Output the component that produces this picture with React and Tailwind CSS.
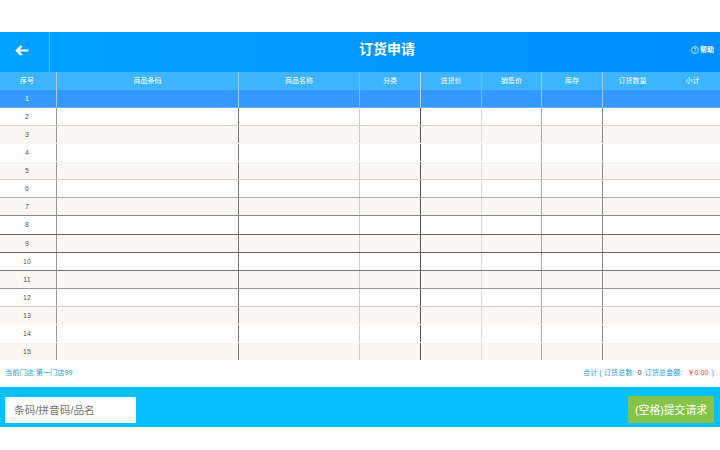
import React from 'react';

const font = "font-['Liberation_Sans','Noto_Sans_CJK_SC',sans-serif]";

// Column widths and divider colours, as they show in the table
const columns = [
  { title: '序号', width: 'w-[57px] pr-[2px]', line: 'border-r-[#999999]', head: 'border-r-[#a9c9e6]' },
  { title: '商品条码', width: 'w-[182px]', line: 'border-r-[#777777]', head: 'border-r-[#a5c8e8]' },
  { title: '商品名称', width: 'w-[121px]', line: 'border-r-[#cfcfcf]', head: 'border-r-[#6cc4ff]' },
  { title: '分类', width: 'w-[61px]', line: 'border-r-[#555555]', head: 'border-r-[#b5d2e6]' },
  { title: '进货价', width: 'w-[61px]', line: 'border-r-[#dddddd]', head: 'border-r-[#6cc4ff]' },
  { title: '销售价', width: 'w-[60px]', line: 'border-r-[#aaaaaa]', head: 'border-r-[#90ccf5]' },
  { title: '库存', width: 'w-[61px]', line: 'border-r-[#888888]', head: 'border-r-[#a5c8e8]' },
  { title: '订货数量', width: 'w-[60px]', line: 'border-r-transparent', head: 'border-r-transparent' },
  { title: '小计', width: 'flex-1 pl-[3px]', line: 'border-r-transparent', head: 'border-r-transparent' },
];

const rowLines = [
  'border-b-[#66b5ff]',
  'border-b-[#d4d0cc]',
  'border-b-transparent',
  'border-b-transparent',
  'border-b-[#d0d0d0]',
  'border-b-[#aaaaaa]',
  'border-b-[#888888]',
  'border-b-[#666666]',
  'border-b-[#666666]',
  'border-b-[#777777]',
  'border-b-[#999999]',
  'border-b-[#cccccc]',
  'border-b-transparent',
  'border-b-transparent',
  'border-b-white',
];

const rows = rowLines.map((line, i) => ({ no: i + 1, line }));

function Row({ row }) {
  const first = row.no === 1;
  const stripe = first ? 'bg-[#3399ff]' : row.no % 2 === 1 ? 'bg-[#fbf8f4]' : 'bg-white';
  return (
    <div className={`flex h-[18.07px] border-b ${row.line} ${stripe}`}>
      {columns.map((col, i) => (
        <div
          key={col.title}
          className={`${col.width} border-r text-center text-[7px] leading-[18px] ${first ? col.head : col.line} ${first ? 'text-white' : 'text-[#555555]'}`}
        >
          {i === 0 ? row.no : ''}
        </div>
      ))}
    </div>
  );
}

export default function App() {
  return (
    <div className={`h-[450px] w-[720px] overflow-hidden bg-white ${font}`}>
      <div className="h-8" />

      {/* Title bar */}
      <div className="flex h-10 items-center bg-gradient-to-r from-[#00a2ff] to-[#008fff] text-white">
        <div className="flex h-full w-[50px] items-center justify-center border-r border-r-[#33d0ff] pr-[5px] pb-1">
          <svg width="14" height="11" viewBox="0 0 14 11" fill="none" stroke="#ffffff">
            <path d="M13.5 5.5H3" strokeWidth="2" />
            <path d="M6.5 1L2 5.5 6.5 10" strokeWidth="2.4" />
          </svg>
        </div>
        <div className="flex-1 pb-[6px] pl-[54px] text-center text-sm leading-none font-bold">订货申请</div>
        <div className="flex w-[50px] items-center justify-end gap-px pr-[6px] pb-1 text-[7px] font-bold">
          <svg width="8" height="8" viewBox="0 0 8 8" fill="none" stroke="#ffffff" strokeWidth="0.7">
            <circle cx="4" cy="4" r="3.4" />
            <path d="M3 3.1c0-1.3 2.1-1.3 2.1 0 0 .8-1.1.8-1.1 1.7M4 5.6v.7" />
          </svg>
          <span>帮助</span>
        </div>
      </div>

      {/* Table */}
      <div className="flex h-[18px] bg-[#3cb4ff]">
        {columns.map((col) => (
          <div key={col.title} className={`${col.width} border-r ${col.head} text-center text-[7px] leading-[18px] text-white`}>
            {col.title}
          </div>
        ))}
      </div>
      {rows.map((row) => (
        <Row key={row.no} row={row} />
      ))}

      {/* Totals */}
      <div className="flex h-[26px] items-center justify-between pr-[6px] pb-[2px] pl-[5px] text-[7.2px] text-[#1f9ad6]">
        <span>当前门店:第一门店99</span>
        <span className="flex gap-[3px]">
          <span>合计 ( 订货总数:</span>
          <span className="text-[#333333]">0</span>
          <span>订货总金额:</span>
          <span className="ml-[2px] text-[#ff2a3a]">￥0.00</span>
          <span>)</span>
        </span>
      </div>

      {/* Scan bar */}
      <div className="flex h-10 items-center justify-between bg-[#06bfff] pt-[6px] pr-[6px] pl-[5px]">
        <div className="flex h-[26px] w-[131px] items-center bg-white pl-[9px] text-[10.7px] text-[#757575]">条码/拼音码/品名</div>
        <div className="flex h-[27px] w-[86px] items-center justify-center bg-[#85c44b] text-[10.8px] text-white">(空格)提交请求</div>
      </div>
    </div>
  );
}
